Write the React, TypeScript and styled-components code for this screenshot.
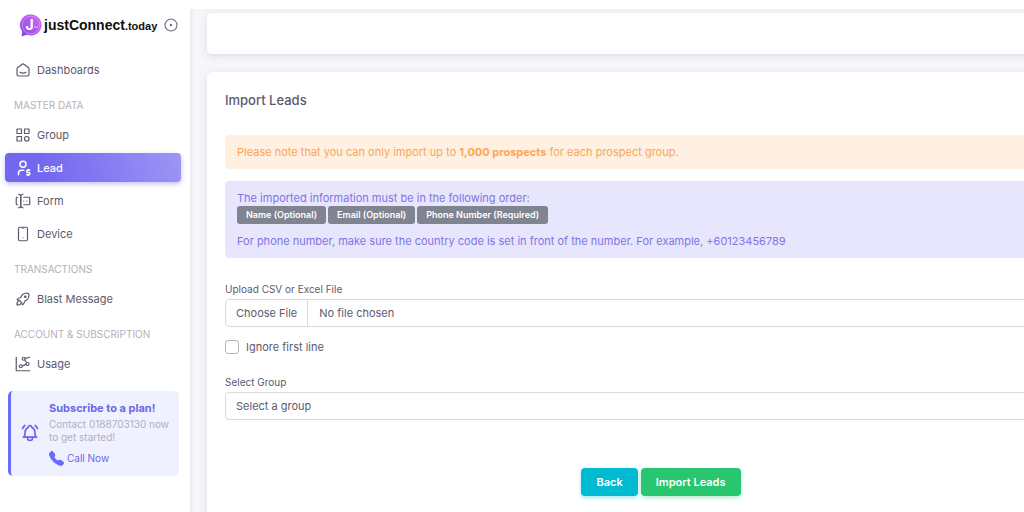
import React, { useState } from "react";
import styled, { createGlobalStyle, css } from "styled-components";
import {
  TbBellRinging,
  TbCategory,
  TbChartDots2,
  TbCircleDot,
  TbDeviceMobile,
  TbForms,
  TbRocket,
  TbSmartHome,
  TbUserDollar,
} from "react-icons/tb";
import { BsTelephoneFill } from "react-icons/bs";

const GlobalStyle = createGlobalStyle`
  *, *::before, *::after { box-sizing: border-box; }
  body {
    margin: 0;
    background: #fff;
    color: #5d596c;
    font-family: Inter, "Liberation Sans", sans-serif;
    font-size: 11px;
    line-height: 16px;
  }
  button, input, select { font: inherit; color: inherit; }
`;

const Page = styled.div`
  display: flex;
  height: 100vh;
  overflow: hidden;
`;

const Sidebar = styled.aside`
  flex: 0 0 190px;
  padding: 9px 9px 0 5px;
  background: #fff;
`;

const Brand = styled.header`
  display: flex;
  align-items: center;
  height: 32px;
  margin-bottom: 14px;
  padding-left: 14px;
`;

const BrandLink = styled.a`
  display: flex;
  align-items: center;
  gap: 2px;
  flex: 1;
  color: #111;
  text-decoration: none;
  white-space: nowrap;
  font: bold 14px/18px "Liberation Sans", sans-serif;

  small { font-size: 11px; }
`;

const PinButton = styled.button`
  display: flex;
  margin-right: 2px;
  padding: 0;
  border: 0;
  background: none;
  color: #6f6b7d;
`;

const Menu = styled.nav`
  display: flex;
  flex-direction: column;
  gap: 4px;
`;

const MenuHeading = styled.h2`
  height: 28px;
  margin: 0;
  padding: 9px 9px 0;
  color: #b3b1ba;
  font-size: 10px;
  font-weight: 400;
  line-height: 16px;
  white-space: nowrap;
`;

const MenuLink = styled.a<{ $active?: boolean }>`
  display: flex;
  align-items: center;
  gap: 5px;
  height: 29px;
  padding: 0 9px;
  border-radius: 4px;
  color: #5d596c;
  text-decoration: none;

  svg { stroke-width: 1.6; }

  ${({ $active }) =>
    $active &&
    css`
      color: #fff;
      font-weight: 500;
      background: linear-gradient(72deg, #7367f0 22%, #9e95f5 100%);
      box-shadow: 0 2px 5px rgba(115, 103, 240, 0.4);

      svg { stroke-width: 2; }
    `}
`;

const Promo = styled.section`
  display: flex;
  align-items: center;
  gap: 9px;
  margin: 13px 2px 0 3px;
  padding: 9px 8px 10px 9px;
  border-left: 3px solid #696cff;
  border-radius: 5px;
  background: #f0f1ff;
  color: #6c66e8;
  white-space: nowrap;
`;

const PromoTitle = styled.h3`
  margin: 0 0 2px;
  font-size: 11px;
  line-height: 16px;
  font-weight: 700;
`;

const PromoText = styled.p`
  margin: 0;
  color: #b0afbd;
  font-size: 10px;
  line-height: 13px;
`;

const CallLink = styled.a`
  display: flex;
  align-items: center;
  gap: 3px;
  margin-top: 6px;
  color: inherit;
  text-decoration: none;
  font-size: 10px;

  svg { color: #696cff; }
`;

const Main = styled.main`
  flex: 1;
  min-width: 0;
  margin-top: 9px;
  padding: 4px 0 0 17px;
  overflow: hidden;
  background: #f7f7fb;
  box-shadow: inset 3px 0 4px -2px rgba(75, 70, 92, 0.12);
`;

const Card = styled.section`
  margin: 0 -91px 18px 0;
  border-radius: 5px;
  background: #fff;
  box-shadow: 0 2px 8px rgba(75, 70, 92, 0.16);
`;

const TopBar = styled(Card)`
  height: 41px;
`;

const FormCard = styled(Card).attrs({ as: "form" })`
  padding: 18px 18px 40px;
`;

const Title = styled.h1`
  margin: 0 0 24px;
  font-size: 13px;
  font-weight: 500;
  line-height: 21px;
`;

const Alerts = styled.div`
  display: flex;
  flex-direction: column;
  gap: 12px;
  margin-bottom: 24px;
`;

const Alert = styled.div<{ $tone: "warning" | "primary" }>`
  padding: 9px 12px;
  border-radius: 4px;
  background: ${({ $tone }) => ($tone === "warning" ? "#fff0e1" : "#e8e6fc")};
  color: ${({ $tone }) => ($tone === "warning" ? "#fba654" : "#8074e6")};

  p { margin: 0; }
`;

const Badges = styled.div`
  display: flex;
  gap: 2px;
  margin-bottom: 9px;
`;

const Badge = styled.span`
  padding: 0 9px;
  border-radius: 3px;
  background: #808390;
  color: #fff;
  font-size: 9px;
  font-weight: 600;
  line-height: 18px;
`;

const Field = styled.div`
  margin-top: 20px;
`;

const Label = styled.label`
  display: block;
  margin-bottom: 3px;
  font-size: 10px;
  line-height: 14px;
`;

const control = css`
  display: block;
  width: 100%;
  height: 28px;
  border: 1px solid #dbdade;
  border-radius: 4px;
  background: #fff;
`;

const FileInput = styled.input`
  ${control}
  line-height: 26px;

  &::file-selector-button {
    height: 26px;
    margin: 0 11px 0 0;
    padding: 0 10px;
    border: 0;
    border-right: 1px solid #dbdade;
    background: transparent;
    color: inherit;
    font: inherit;
  }
`;

const Select = styled.select`
  ${control}
  padding: 0 10px;
  appearance: none;
`;

const Check = styled.label`
  display: flex;
  align-items: center;
  gap: 7px;
  margin-top: 12px;
`;

const Checkbox = styled.input`
  width: 14px;
  height: 14px;
  margin: 0;
  border: 1px solid #b5b3bd;
  border-radius: 3px;
  background: #fff;
  appearance: none;

  &:checked { background: #7367f0; }
`;

const Actions = styled.div`
  display: flex;
  justify-content: center;
  gap: 3px;
  margin-top: 48px;
`;

const Button = styled.button<{ $color: string }>`
  height: 28px;
  padding: 0 15px;
  border: 0;
  border-radius: 4px;
  background: ${({ $color }) => $color};
  box-shadow: 0 2px 4px ${({ $color }) => $color}55;
  color: #fff;
  font-weight: 600;
`;

function Logo() {
  return (
    <svg width="23" height="23" viewBox="0 0 23 23" aria-hidden="true">
      <defs>
        <linearGradient id="bubble" x1="0" y1="1" x2="1" y2="0">
          <stop offset="0" stopColor="#8b45e6" />
          <stop offset="1" stopColor="#cf6df5" />
        </linearGradient>
      </defs>
      <path d="M12 0.5a10.5 10.5 0 1 1-4 20.2L2.5 22.5 3.2 17.5A10.5 10.5 0 0 1 12 0.5Z" fill="url(#bubble)" />
      <circle cx="12" cy="11" r="8.8" fill="none" stroke="#dc9cfa" strokeWidth="0.7" />
      <text x="6.5" y="16" fill="#fff" fontSize="14" fontWeight="700" fontFamily="Inter, sans-serif">J</text>
      <path d="M15 13h1.5M17.3 13h1.5" stroke="#e7bcfb" strokeWidth="1.5" />
    </svg>
  );
}

export default function App() {
  const [skipFirst, setSkipFirst] = useState(false);
  return (
    <>
      <GlobalStyle />
      <Page>
        <Sidebar>
          <Brand>
            <BrandLink href="#home">
              <Logo />
              <span>justConnect<small>.today</small></span>
            </BrandLink>
            <PinButton type="button" aria-label="Pin menu"><TbCircleDot size={16} strokeWidth={1.6} /></PinButton>
          </Brand>
          <Menu>
            <MenuLink href="#dashboards"><TbSmartHome size={18} />Dashboards</MenuLink>
            <MenuHeading>MASTER DATA</MenuHeading>
            <MenuLink href="#group"><TbCategory size={18} />Group</MenuLink>
            <MenuLink href="#lead" $active aria-current="page"><TbUserDollar size={18} />Lead</MenuLink>
            <MenuLink href="#form"><TbForms size={18} />Form</MenuLink>
            <MenuLink href="#device"><TbDeviceMobile size={18} />Device</MenuLink>
            <MenuHeading>TRANSACTIONS</MenuHeading>
            <MenuLink href="#blast"><TbRocket size={18} />Blast Message</MenuLink>
            <MenuHeading>ACCOUNT &amp; SUBSCRIPTION</MenuHeading>
            <MenuLink href="#usage"><TbChartDots2 size={18} />Usage</MenuLink>
          </Menu>
          <Promo>
            <TbBellRinging size={20} strokeWidth={2} />
            <div>
              <PromoTitle>Subscribe to a plan!</PromoTitle>
              <PromoText>Contact 0188703130 now<br />to get started!</PromoText>
              <CallLink href="tel:0188703130"><BsTelephoneFill size={15} />Call Now</CallLink>
            </div>
          </Promo>
        </Sidebar>
        <Main>
          <TopBar />
          <FormCard>
            <Title>Import Leads</Title>
            <Alerts>
              <Alert $tone="warning">
                <p>Please note that you can only import up to <strong>1,000 prospects</strong> for each prospect group.</p>
              </Alert>
              <Alert $tone="primary">
                <p>The imported information must be in the following order:</p>
                <Badges>
                  <Badge>Name (Optional)</Badge>
                  <Badge>Email (Optional)</Badge>
                  <Badge>Phone Number (Required)</Badge>
                </Badges>
                <p>For phone number, make sure the country code is set in front of the number. For example, +60123456789</p>
              </Alert>
            </Alerts>
            <Field>
              <Label htmlFor="file">Upload CSV or Excel File</Label>
              <FileInput id="file" type="file" />
            </Field>
            <Check>
              <Checkbox type="checkbox" checked={skipFirst} onChange={(e) => setSkipFirst(e.target.checked)} />
              Ignore first line
            </Check>
            <Field>
              <Label htmlFor="group">Select Group</Label>
              <Select id="group"><option>Select a group</option></Select>
            </Field>
            <Actions>
              <Button type="button" $color="#00bad1">Back</Button>
              <Button type="button" $color="#28c76f">Import Leads</Button>
            </Actions>
          </FormCard>
        </Main>
      </Page>
    </>
  );
}
